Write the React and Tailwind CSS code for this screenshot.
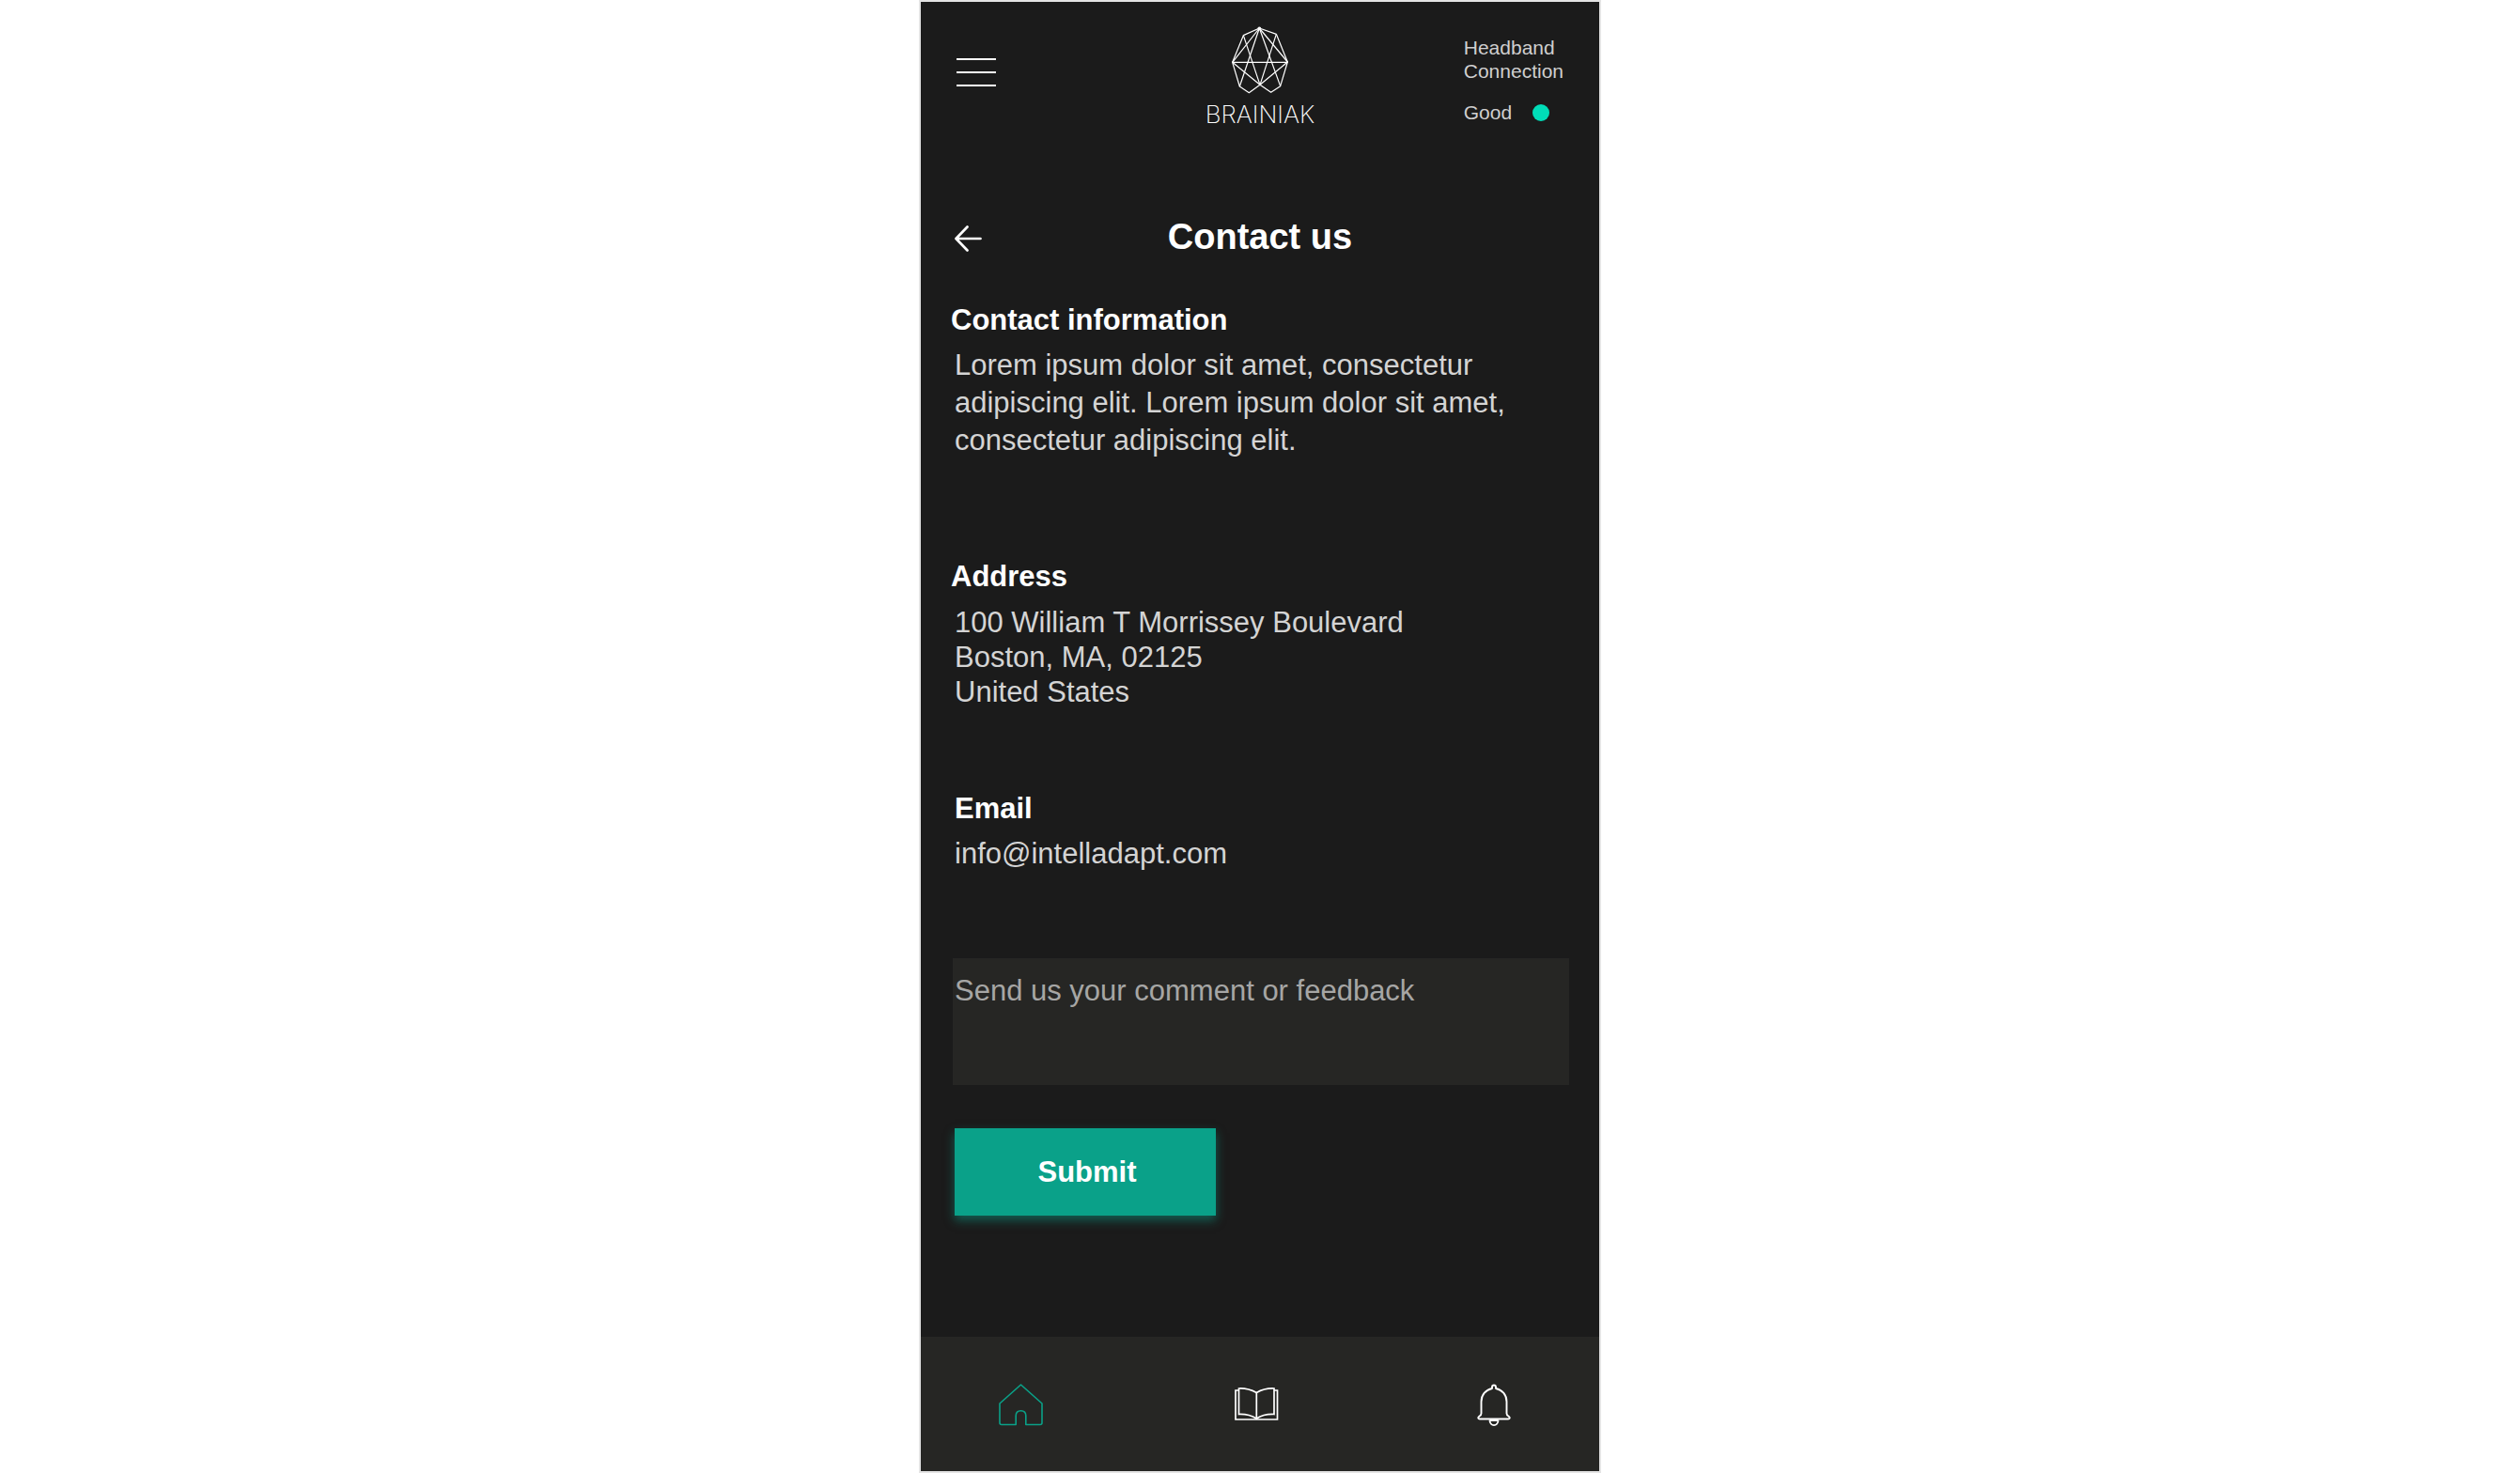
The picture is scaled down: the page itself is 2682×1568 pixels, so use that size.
import React from "react";

function BrainLogo() {
  return (
    <div className="flex flex-col items-center gap-2">
      <svg
        width="62"
        height="73"
        viewBox="150 37 186 219"
        fill="none"
        stroke="#ffffff"
        strokeWidth="3.6"
        strokeLinejoin="round"
        aria-hidden="true"
      >
        <path d="M241 46 190 69 155 155 178 232 208 252 243 227 278 251 308 231 331 154 295 65Z" />
        <path d="M241 46 155 155 243 227 331 154Z" />
        <path d="M155 155H331" />
        <path d="M241 46 178 232M241 46 308 231" />
        <path d="M190 69 243 227 295 65" />
        <circle cx="241" cy="47" r="4" fill="#ffffff" />
      </svg>
      <span className="font-['Inter',sans-serif] text-[26px] leading-[28px] font-extralight text-white">
        BRAINIAK
      </span>
    </div>
  );
}

function Header() {
  return (
    <header className="grid grid-cols-[1fr_auto_1fr] items-start px-[38px] pt-[25px]">
      <button type="button" aria-label="Open menu" className="mt-[35px] flex w-[42px] flex-col gap-3">
        <span className="h-0.5 w-full bg-white" />
        <span className="h-0.5 w-full bg-white" />
        <span className="h-0.5 w-full bg-white" />
      </button>
      <BrainLogo />
      <div className="mt-[11px] justify-self-end text-[21px] leading-[25px] text-[#cfcfcf]">
        <p>
          Headband
          <br />
          Connection
        </p>
        <p className="mt-[19px] flex items-center gap-[22px]">
          Good
          <span className="size-[18px] rounded-full bg-[#00ddb8]" />
        </p>
      </div>
    </header>
  );
}

function SectionHeading({ children }) {
  return <h2 className="text-[31px] leading-10 font-bold text-white">{children}</h2>;
}

function HomeIcon() {
  return (
    <svg width="48" height="48" viewBox="0 0 48 48" fill="none" stroke="#0aa188" strokeWidth="1.6" strokeLinejoin="round" aria-hidden="true">
      <path d="M24.5 3 47 23V43.5Q47 45.5 45 45.5H29.8V36Q29.8 30.7 24.5 30.7 19.2 30.7 19.2 36V45.5H4Q2 45.5 2 43.5V23Z" />
    </svg>
  );
}

function BookIcon() {
  return (
    <svg width="48" height="48" viewBox="0 0 48 48" fill="none" stroke="#ffffff" strokeWidth="1.7" aria-hidden="true">
      <path d="M4 9H1V40H45.500V9H42" />
      <path d="M23.300 11.500Q14 6.500 4.500 7V34.500Q15 34 23.300 39 31 34 42 34.500V7Q32 6.500 23.300 11.500Z" />
      <path d="M23.300 11.500V39.500" />
    </svg>
  );
}

function BellIcon() {
  return (
    <svg width="48" height="48" viewBox="0 0 48 48" fill="none" stroke="#ffffff" strokeWidth="1.9" strokeLinejoin="round" aria-hidden="true">
      <path d="M22 7V5.500A2 2 0 0 1 26 5.500V7C33 8.500 37.500 14 37.500 21V33.500Q37.500 35.500 39.500 36.500C41.500 38 41 39.500 39 39.500H9C7 39.500 6.500 38 8.500 36.500Q10.500 35.500 10.500 33.500V21C10.500 14 15 8.500 22 7Z" />
      <path d="M19.500 40.500C19.500 48 28.500 48 28.500 40.500" />
      <path d="M19.500 41H28.500" />
    </svg>
  );
}

export default function App() {
  return (
    <div className="mx-auto flex min-h-screen w-full max-w-[726px] flex-col border-2 border-[#e4e4e4] bg-[#1b1b1b] font-['Liberation_Sans',Arial,sans-serif]">
      <Header />

      <div className="mt-[92px] grid grid-cols-[1fr_auto_1fr] items-end px-9">
        <button type="button" aria-label="Back" className="h-11 w-7">
          <svg width="29" height="44" viewBox="0 0 29 44" fill="none" stroke="#ffffff" strokeWidth="2.7" strokeLinecap="round" strokeLinejoin="round" aria-hidden="true">
            <path d="M27.500 22H2M13.500 9.500 1.500 22 13.500 34.500" />
          </svg>
        </button>
        <h1 className="text-[38px] leading-[48px] font-bold text-white">Contact us</h1>
      </div>

      <main className="flex-1 px-8 pt-[45px] pb-10 text-[31px] leading-10 text-[#d4d4d4]">
        <section>
          <SectionHeading>Contact information</SectionHeading>
          <p className="mt-2 pl-1">
            Lorem ipsum dolor sit amet, consectetur adipiscing elit. Lorem ipsum dolor sit amet,
            consectetur adipiscing elit.
          </p>
        </section>

        <section className="mt-[105px]">
          <SectionHeading>Address</SectionHeading>
          <address className="mt-2.5 pl-1 leading-[37px] not-italic">
            100 William T Morrissey Boulevard
            <br />
            Boston, MA, 02125
            <br />
            United States
          </address>
        </section>

        <section className="mt-[86px] pl-1">
          <SectionHeading>Email</SectionHeading>
          <a href="mailto:info@intelladapt.com" className="mt-2 block">
            info@intelladapt.com
          </a>
        </section>

        <form className="mt-[91px]" onSubmit={(event) => event.preventDefault()}>
          <div className="pl-0.5">
            <textarea
              aria-label="Send us your comment or feedback"
              placeholder="Send us your comment or feedback"
              className="block h-[135px] w-full resize-none bg-[#262624] px-0.5 pt-[15px] text-white outline-none placeholder:text-[#a6a6a5]"
            />
          </div>
          <button
            type="submit"
            className="mt-[46px] ml-1 h-[93px] w-[278px] bg-[#0aa189] pl-1 font-bold text-white shadow-[0_5px_10px_rgba(10,161,137,0.5)]"
          >
            Submit
          </button>
        </form>
      </main>

      <nav aria-label="Main" className="flex items-center justify-between bg-[#262624] pt-12 pr-[88px] pb-[47px] pl-[82px]">
        <a href="#home" aria-label="Home" aria-current="page">
          <HomeIcon />
        </a>
        <a href="#library" aria-label="Library">
          <BookIcon />
        </a>
        <a href="#notifications" aria-label="Notifications">
          <BellIcon />
        </a>
      </nav>
    </div>
  );
}
